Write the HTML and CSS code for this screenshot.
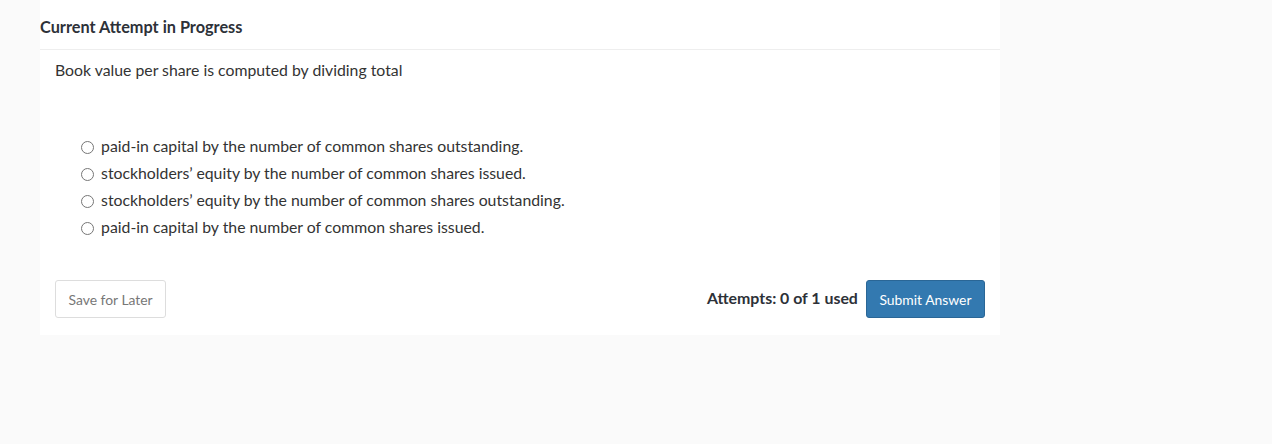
FILE: index.html
```html
<!DOCTYPE html>
<html>
<head>
	<meta charset="UTF-8" />
	<title>Current Attempt in Progress</title>
	<link rel="stylesheet" href="styles.css">
</head>
<body>
    <div class="panel">
        <div class="panel_head">Current Attempt in Progress</div>
        <div class="panel_body">
            <div class="question">Book value per share is computed by dividing total</div>
            <ul class="choices">
                <li><label><input type="radio" name="ans" /> paid-in capital by the number of common shares outstanding.</label></li>
                <li><label><input type="radio" name="ans" /> stockholders’ equity by the number of common shares issued.</label></li>
                <li><label><input type="radio" name="ans" /> stockholders’ equity by the number of common shares outstanding.</label></li>
                <li><label><input type="radio" name="ans" /> paid-in capital by the number of common shares issued.</label></li>
            </ul>
            <div class="actions">
                <button class="btn btn_save">Save for Later</button>
                <div class="actions_right">
                    <span class="attempts">Attempts: 0 of 1 used</span>
                    <button class="btn btn_submit">Submit Answer</button>
                </div>
            </div>
        </div>
    </div>
</body>
</html>
```

FILE: styles.css
```css
html, body{
    margin: 0;
    background: #fafafa;
}

body{
    font-family: Lato, "Liberation Sans", sans-serif;
    color: #333;
    height: 444px;
}

.panel{
    width: 960px;
    margin-left: 40px;
    background: #fff;
}

.panel_head{
    height: 49px;
    line-height: 54px;
    font-size: 16.3px;
    font-weight: bold;
    color: #2d3138;
    border-bottom: 1px solid #eee;
}

.panel_body{
    padding: 0 15px 17px;
}

.question{
    font-size: 15.8px;
    line-height: 20px;
    padding-top: 10px;
}

.choices{
    list-style: none;
    margin: 52px 0 0;
    padding: 0 0 0 26px;
    font-size: 15.8px;
}

.choices li{
    height: 27px;
    line-height: 27px;
}

.choices input{
    margin: 0 3px 0 0;
    width: 13px;
    height: 13px;
    vertical-align: -2px;
}

.actions{
    display: flex;
    justify-content: space-between;
    align-items: center;
    margin-top: 40px;
}

.actions_right{
    display: flex;
    align-items: center;
    gap: 8px;
}

.btn{
    font-family: Lato, "Liberation Sans", sans-serif;
    font-size: 13.9px;
    height: 38px;
    border-radius: 3px;
    padding: 0 12.5px;
    cursor: pointer;
}

.btn_save{
    background: #fff;
    border: 1px solid #ddd;
    color: #777;
}

.btn_submit{
    background: #3379b0;
    border: 1px solid #2a6696;
    color: #fff;
}

.attempts{
    font-size: 15.9px;
    font-weight: bold;
    color: #2d3138;
    margin-top: -3px;
}
```
